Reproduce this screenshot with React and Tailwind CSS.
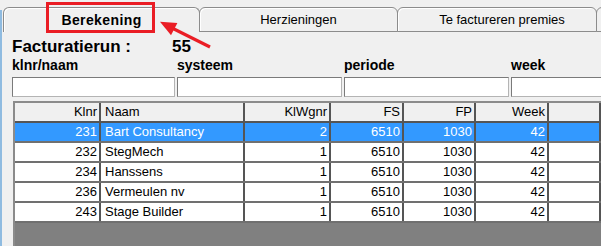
import React from "react";

const rows = [
  { klnr: 231, naam: "Bart Consultancy", wgnr: 2, fs: 6510, fp: 1030, week: 42, selected: true },
  { klnr: 232, naam: "StegMech", wgnr: 1, fs: 6510, fp: 1030, week: 42 },
  { klnr: 234, naam: "Hanssens", wgnr: 1, fs: 6510, fp: 1030, week: 42 },
  { klnr: 236, naam: "Vermeulen nv", wgnr: 1, fs: 6510, fp: 1030, week: 42 },
  { klnr: 243, naam: "Stage Builder", wgnr: 1, fs: 6510, fp: 1030, week: 42 },
];

const gridCols = "grid grid-cols-[86px_144px_86px_73px_72px_73px_1fr]";

const Cell = ({ children, right, selected, header }) => (
  <div
    className={`h-full border-r-2 border-[#555555] leading-[18px] truncate ${
      right ? "text-right pr-[2px]" : "text-left pl-[4px]"
    } ${header ? "bg-[#f0f0f0]" : selected ? "bg-[#3399ff] text-white" : "bg-white"}`}
  >
    {children}
  </div>
);

const App = () => {
  return (
    <div className="relative w-[601px] h-[246px] overflow-hidden bg-[#f0f0f0] text-[13px] text-black font-['Liberation_Sans',Arial,sans-serif]">
      <div className="flex h-full">
        {/* window frame strip */}
        <div className="w-[2px] mt-[10px] bg-[#8fbbe0]" />

        <div className="flex-1 flex flex-col min-w-0">
          {/* tabs */}
          <div className="flex items-end h-[32px] pl-[1px]">
            <div className="w-[197px] h-[25px] shrink-0 flex items-center justify-center border-t border-l border-r border-[#8c8c8c] rounded-t-[6px] shadow-[inset_1px_1px_0_#ffffff] font-bold text-[14px] tracking-[0.4px]">
              Berekening
            </div>
            <div className="w-[199px] h-[25px] shrink-0 -ml-px flex items-center justify-center border border-[#8c8c8c] rounded-t-[6px] shadow-[inset_1px_1px_0_#ffffff]">
              Herzieningen
            </div>
            <div className="w-[200px] h-[25px] shrink-0 -ml-px flex items-center justify-center pl-[10px] border border-[#8c8c8c] rounded-t-[6px] shadow-[inset_1px_1px_0_#ffffff]">
              Te factureren premies
            </div>
            <div className="w-[60px] h-[25px] shrink-0 -ml-px border border-[#8c8c8c] rounded-t-[6px]" />
          </div>

          {/* tab page */}
          <div className="flex-1 flex flex-col min-h-0 pl-[10px]">
            <div className="flex h-[20px] mt-[5px] items-center font-bold text-[17px] leading-[20px]">
              <span className="w-[160px]">Facturatierun :</span>
              <span>55</span>
            </div>

            <div className="grid grid-cols-[165px_167px_167px_167px] h-[16px] font-bold text-[14px] leading-[16px]">
              <span>klnr/naam</span>
              <span>systeem</span>
              <span>periode</span>
              <span>week</span>
            </div>

            <div className="grid grid-cols-[165px_167px_167px_167px] mt-[4px] h-[20px]">
              {[163, 165, 165, 165].map((w, i) => (
                <div
                  key={i}
                  style={{ width: w }}
                  className="h-[20px] bg-white border border-[#b4b4b4] border-t-[#7a7a7a] border-l-[#7a7a7a]"
                />
              ))}
            </div>

            {/* data grid */}
            <div className="flex-1 mt-[4px] ml-[1px] flex flex-col bg-[#808080] border-t-2 border-l-2 border-[#8b8b8b]">
              <div className={`${gridCols} h-[20px] border-b-2 border-[#555555]`}>
                <Cell header right>Klnr</Cell>
                <Cell header>Naam</Cell>
                <Cell header right>KlWgnr</Cell>
                <Cell header right>FS</Cell>
                <Cell header right>FP</Cell>
                <Cell header right>Week</Cell>
                <Cell header></Cell>
              </div>
              {rows.map((r) => (
                <div key={r.klnr} className={`${gridCols} h-[20px] border-b-2 border-[#707070]`}>
                  <Cell right selected={r.selected}>{r.klnr}</Cell>
                  <Cell selected={r.selected}>{r.naam}</Cell>
                  <Cell right selected={r.selected}>{r.wgnr}</Cell>
                  <Cell right selected={r.selected}>{r.fs}</Cell>
                  <Cell right selected={r.selected}>{r.fp}</Cell>
                  <Cell right selected={r.selected}>{r.week}</Cell>
                  <Cell selected={r.selected}></Cell>
                </div>
              ))}
            </div>
          </div>
        </div>
      </div>

      {/* red annotation */}
      <div className="absolute left-[46px] top-[2px] w-[109px] h-[31px] border-[3px] border-[#ea1d25]" />
      <svg className="absolute left-0 top-0" width="601" height="246" viewBox="0 0 601 246">
        <line x1="210" y1="47" x2="173" y2="28.5" stroke="#ea1d25" strokeWidth="3.2" />
        <polygon points="160,21.7 177.4,22.9 171,35.3" fill="#ea1d25" />
      </svg>
    </div>
  );
};

export default App;
